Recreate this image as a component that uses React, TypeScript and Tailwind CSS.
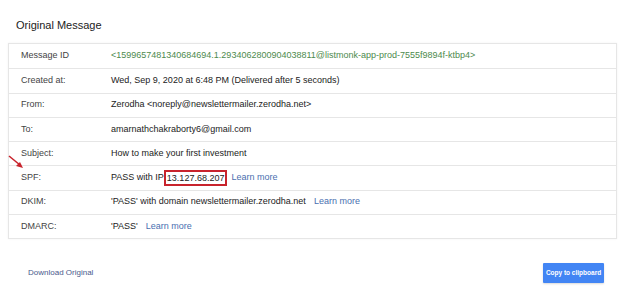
import React from 'react';

const ROWS: { label: string; value: React.ReactNode }[] = [
  {
    label: 'Message ID',
    value: (
      <span className="text-[#4d8a4d]">
        &lt;1599657481340684694.1.2934062800904038811@listmonk-app-prod-7555f9894f-ktbp4&gt;
      </span>
    ),
  },
  { label: 'Created at:', value: 'Wed, Sep 9, 2020 at 6:48 PM (Delivered after 5 seconds)' },
  { label: 'From:', value: 'Zerodha <noreply@newslettermailer.zerodha.net>' },
  { label: 'To:', value: 'amarnathchakraborty6@gmail.com' },
  { label: 'Subject:', value: 'How to make your first investment' },
  {
    label: 'SPF:',
    value: (
      <>
        PASS with IP
        <span className="border-2 border-[#c8232c] px-[1px] leading-[12px]">13.127.68.207</span>
        <a className="ml-1 text-[#4a6fb0]">Learn more</a>
      </>
    ),
  },
  {
    label: 'DKIM:',
    value: (
      <>
        'PASS' with domain newslettermailer.zerodha.net
        <a className="ml-2 text-[#4a6fb0]">Learn more</a>
      </>
    ),
  },
  {
    label: 'DMARC:',
    value: (
      <>
        'PASS'
        <a className="ml-2 text-[#4a6fb0]">Learn more</a>
      </>
    ),
  },
];

export default function App() {
  return (
    <div className="w-[629px] h-[308px] bg-white text-[#333] font-['Liberation_Sans',Arial,sans-serif] relative">
      <h1 className="pl-4 pt-[18px] text-[11px] leading-[14px] text-[#222]">Original Message</h1>

      <div className="ml-2 mt-[11px] w-[609px] border border-[#e6e6e6] shadow-[0_0_2px_rgba(0,0,0,0.06)]">
        {ROWS.map((r, i) => (
          <div
            key={r.label}
            className={`flex items-center h-[24.25px] text-[9px] ${i > 0 ? 'border-t border-[#e6e6e6]' : ''}`}
          >
            <div className="w-[102px] pl-3 shrink-0 text-[#444]">{r.label}</div>
            <div className="text-[#222] whitespace-nowrap flex items-center">{r.value}</div>
          </div>
        ))}
      </div>

      <div className="flex items-center justify-between mt-6 pl-7 pr-[25px]">
        <a className="text-[8px] text-[#4a5a8c]">Download Original</a>
        <button
          type="button"
          className="w-[61px] h-[20px] bg-[#4285f4] text-white text-[6.5px] font-bold rounded-[1px] shadow-[0_1px_2px_rgba(0,0,0,0.15)]"
        >
          Copy to clipboard
        </button>
      </div>

      {/* annotation arrow */}
      <svg className="absolute left-[8px] top-[155px]" width="18" height="16" viewBox="0 0 18 16">
        <line x1="1" y1="1" x2="12" y2="10" stroke="#c8232c" strokeWidth="1.6" />
        <polygon points="15,13 8,11 12,7" fill="#c8232c" />
      </svg>
    </div>
  );
}
